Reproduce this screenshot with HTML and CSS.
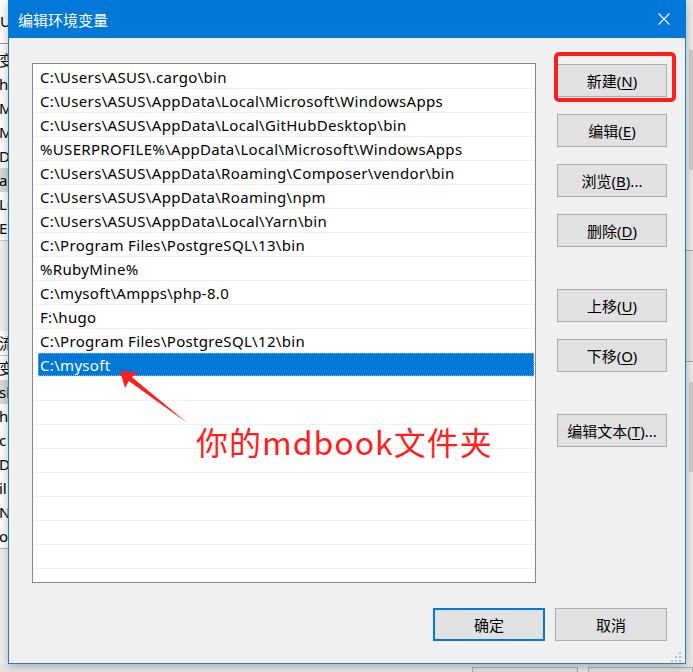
FILE: index.html
```html
<!DOCTYPE html>
<html lang="zh-CN">
<head>
<meta charset="utf-8">
<title>编辑环境变量</title>
<link rel="stylesheet" href="styles.css">
</head>
<body>
<div class="screen">
  <div class="bg-left">
    <div class="bgl-head">U</div>
    <div class="bgl-row">变</div>
    <div class="bgl-row">h</div>
    <div class="bgl-row">M</div>
    <div class="bgl-row">M(</div>
    <div class="bgl-row">Dr</div>
    <div class="bgl-row bgl-sel">a</div>
    <div class="bgl-row">Lu</div>
    <div class="bgl-row">E</div>
    <div class="bgl-gap"></div>
    <div class="bgl-row bgl-lined">流</div>
    <div class="bgl-row">变</div>
    <div class="bgl-row bgl-sel">sl</div>
    <div class="bgl-row">h</div>
    <div class="bgl-row">c</div>
    <div class="bgl-row">Dr</div>
    <div class="bgl-row">il</div>
    <div class="bgl-row">NU</div>
    <div class="bgl-row">os</div>
    <div class="bgl-foot"></div>
  </div>
  <div class="bg-right">
    <div class="bgr-bar"></div>
    <div class="bgr-panel"></div>
    <div class="bgr-bar2"></div>
  </div>
  <div class="bg-bottom">
    <div class="bgb-btn"></div>
    <div class="bgb-btn"></div>
  </div>

  <div class="dialog">
    <div class="titlebar">
      <span class="title">编辑环境变量</span>
      <svg class="close" width="12" height="12" viewBox="0 0 12 12"><path d="M0.5 0.5 L11.5 11.5 M11.5 0.5 L0.5 11.5" stroke="#fff" stroke-width="1.1" fill="none"/></svg>
    </div>
    <div class="content">
      <div class="main">
        <div class="list">
          <div class="row">C:\Users\ASUS\.cargo\bin</div>
          <div class="row">C:\Users\ASUS\AppData\Local\Microsoft\WindowsApps</div>
          <div class="row">C:\Users\ASUS\AppData\Local\GitHubDesktop\bin</div>
          <div class="row">%USERPROFILE%\AppData\Local\Microsoft\WindowsApps</div>
          <div class="row">C:\Users\ASUS\AppData\Roaming\Composer\vendor\bin</div>
          <div class="row">C:\Users\ASUS\AppData\Roaming\npm</div>
          <div class="row">C:\Users\ASUS\AppData\Local\Yarn\bin</div>
          <div class="row">C:\Program Files\PostgreSQL\13\bin</div>
          <div class="row">%RubyMine%</div>
          <div class="row">C:\mysoft\Ampps\php-8.0</div>
          <div class="row">F:\hugo</div>
          <div class="row">C:\Program Files\PostgreSQL\12\bin</div>
          <div class="row selected"><span class="sel">C:\mysoft</span></div>
          <div class="row"></div>
          <div class="row"></div>
          <div class="row"></div>
          <div class="row"></div>
          <div class="row"></div>
          <div class="row"></div>
          <div class="row"></div>
          <div class="row"></div>
        </div>
        <div class="actions">
          <div class="group">
            <button class="btn">新建(<u>N</u>)</button>
            <button class="btn">编辑(<u>E</u>)</button>
            <button class="btn">浏览(<u>B</u>)...</button>
            <button class="btn">删除(<u>D</u>)</button>
          </div>
          <div class="group">
            <button class="btn">上移(<u>U</u>)</button>
            <button class="btn">下移(<u>O</u>)</button>
          </div>
          <div class="group">
            <button class="btn">编辑文本(<u>T</u>)...</button>
          </div>
        </div>
      </div>
      <div class="footer">
        <button class="btn btn-wide btn-default">确定</button>
        <button class="btn btn-wide">取消</button>
      </div>
      <svg class="grip" width="12" height="12" viewBox="0 0 12 12">
        <rect x="9" y="1" width="2" height="2" fill="#bcbcbc"/>
        <rect x="5" y="5" width="2" height="2" fill="#bcbcbc"/>
        <rect x="9" y="5" width="2" height="2" fill="#bcbcbc"/>
        <rect x="1" y="9" width="2" height="2" fill="#bcbcbc"/>
        <rect x="5" y="9" width="2" height="2" fill="#bcbcbc"/>
        <rect x="9" y="9" width="2" height="2" fill="#bcbcbc"/>
      </svg>
    </div>
  </div>

  <div class="mark-rect"></div>
  <svg class="arrow" width="80" height="65" viewBox="115 365 80 65">
    <polygon points="120,371 138,372.5 131.8,376.9 188,423.5 128.8,380.9 125,388" fill="#ff1e1e"/>
  </svg>
  <div class="note">你的mdbook文件夹</div>
</div>
</body>
</html>
```
FILE: styles.css
```css
html, body {
  margin: 0;
  padding: 0;
}
body {
  width: 693px;
  height: 672px;
  overflow: hidden;
  background: #f0f0f0;
  font-family: "Noto Sans", "Noto Sans CJK SC", sans-serif;
}
.screen {
  position: relative;
  width: 693px;
  height: 672px;
  overflow: hidden;
  background: #f0f0f0;
}

/* background window, left strip */
.bg-left {
  position: absolute;
  left: 0;
  top: 0;
  width: 40px;
  height: 672px;
  background: #ffffff;
  font-family: "Noto Sans", "Noto Sans CJK SC", sans-serif;
  font-size: 15px;
  color: #000;
  display: flex;
  flex-direction: column;
}
.bgl-head {
  height: 43px;
  border-bottom: 1px solid #a0a0a0;
  line-height: 43px;
  padding-left: 0;
  margin-bottom: 4px;
}
.bgl-row {
  height: 24px;
  line-height: 24px;
  margin-left: -1px;
}
.bgl-sel {
  background: #d9d9d9;
}
.bgl-gap {
  height: 90px;
  background: #f0f0f0;
  border-top: 1px solid #d0d0d0;
}
.bgl-lined {
  border-bottom: 1px solid #c8c8c8;
}
.bgl-foot {
  flex: 1;
  background: #f0f0f0;
  border-top: 1px solid #b8b8b8;
}

/* background window, right strip */
.bg-right {
  position: absolute;
  left: 680px;
  top: 0;
  width: 13px;
  height: 672px;
  background: #ececec;
  display: flex;
  flex-direction: column;
  align-items: flex-end;
}
.bgr-bar {
  width: 4px;
  height: 120px;
  margin-top: 50px;
  background: #cdcdcd;
}
.bgr-panel {
  width: 13px;
  height: 110px;
  margin-top: 80px;
  border-top: 1px solid #a8a8a8;
  border-bottom: 1px solid #a8a8a8;
  background: #e4e4e4;
}
.bgr-bar2 {
  width: 4px;
  height: 90px;
  margin-top: 20px;
  background: #cdcdcd;
}

/* background bottom */
.bg-bottom {
  position: absolute;
  left: 0;
  top: 664px;
  width: 693px;
  height: 8px;
  background: #e6e6e6;
  display: flex;
  padding-left: 472px;
  box-sizing: border-box;
  gap: 10px;
  padding-top: 3px;
}
.bgb-btn {
  width: 110px;
  height: 20px;
  background: #e1e1e1;
  border: 1px solid #adadad;
  box-sizing: border-box;
}

/* dialog */
.dialog {
  position: absolute;
  left: 8px;
  top: 0;
  width: 678px;
  height: 664px;
  box-sizing: border-box;
  border: 1px solid #1a7fd6;
  border-top: 0;
  background: #f0f0f0;
  box-shadow: 0 2px 10px rgba(0, 0, 0, 0.28);
  display: flex;
  flex-direction: column;
}
.titlebar {
  height: 38px;
  margin: 0 -1px;
  background: #0078d7;
  display: flex;
  align-items: center;
  justify-content: space-between;
  padding: 0 16px 0 10px;
  flex-shrink: 0;
}
.title {
  color: #ffffff;
  font-family: "Noto Sans CJK SC", sans-serif;
  font-size: 15px;
  line-height: 20px;
  margin-top: 1px;
}
.close {
  display: block;
}
.content {
  position: relative;
  flex: 1;
  padding: 25px 18px 0 23px;
}
.main {
  display: flex;
  align-items: flex-start;
}
.list {
  width: 504px;
  height: 520px;
  box-sizing: border-box;
  border: 1px solid #828790;
  background: #ffffff;
  padding: 1px 0 0 0;
  overflow: hidden;
  flex-shrink: 0;
}
.row {
  height: 23px;
  line-height: 24px;
  border-bottom: 1px solid #f0f0f0;
  margin-left: 1px;
  padding-left: 6px;
  font-family: "Noto Sans", "Noto Sans CJK SC", sans-serif;
  font-size: 15px;
  letter-spacing: 0.32px;
  color: #000000;
  white-space: nowrap;
}
.row.selected {
  padding-left: 4px;
  padding-right: 1px;
}
.sel {
  display: block;
  height: 23px;
  background: #0078d7;
  color: #ffffff;
  padding-left: 2px;
  outline: 1px dotted #7fb3e6;
  outline-offset: -1px;
}
.actions {
  margin-left: 21px;
  margin-top: 1px;
  display: flex;
  flex-direction: column;
  gap: 42px;
}
.group {
  display: flex;
  flex-direction: column;
  gap: 17px;
}
.btn {
  width: 110px;
  height: 33px;
  box-sizing: border-box;
  border: 1px solid #adadad;
  background: #e1e1e1;
  border-radius: 0;
  padding: 0;
  margin: 0;
  font-family: "Noto Sans", "Noto Sans CJK SC", sans-serif;
  font-size: 15px;
  color: #000000;
  line-height: 20px;
}
.btn u {
  text-decoration: underline;
  text-underline-offset: 2px;
}
.footer {
  display: flex;
  justify-content: flex-end;
  gap: 10px;
  margin-top: 25px;
}
.btn-wide {
  width: 112px;
}
.btn-default {
  border: 2px solid #0078d7;
}
.grip {
  position: absolute;
  right: 3px;
  bottom: 0;
}

/* annotations */
.mark-rect {
  position: absolute;
  left: 554px;
  top: 52px;
  width: 122px;
  height: 50px;
  box-sizing: border-box;
  border: 4px solid #ff1e1e;
  border-radius: 5px;
}
.arrow {
  position: absolute;
  left: 115px;
  top: 365px;
}
.note {
  position: absolute;
  left: 196px;
  top: 424px;
  font-family: "Noto Sans CJK SC", sans-serif;
  font-size: 32px;
  letter-spacing: 1px;
  line-height: 34px;
  color: #ff1e1e;
  white-space: nowrap;
}
```
